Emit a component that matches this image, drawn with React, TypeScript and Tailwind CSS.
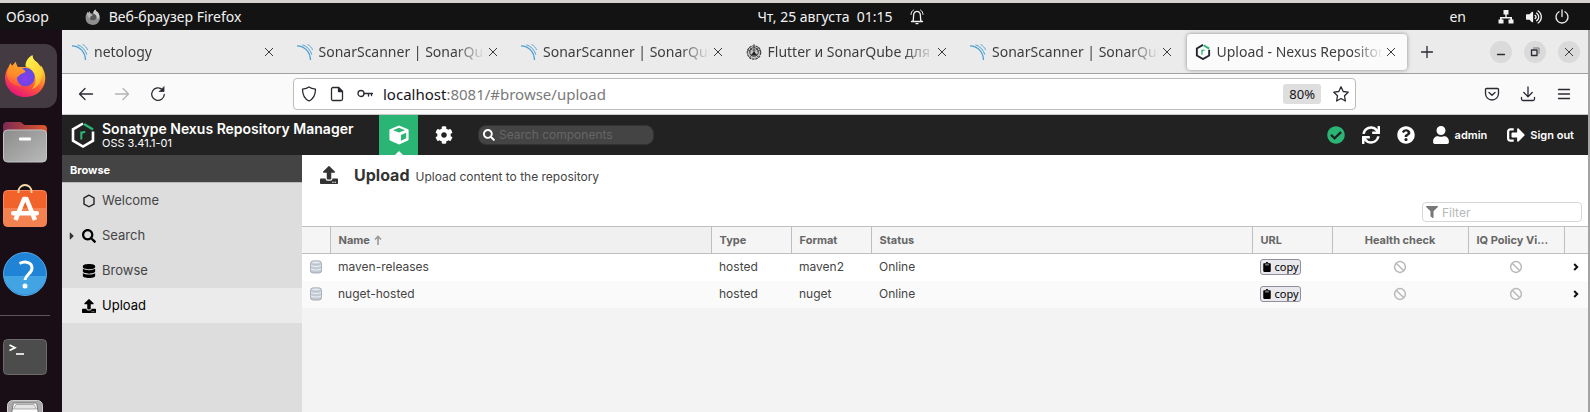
import React from "react";
import {
  FaSearch,
  FaDatabase,
  FaUpload,
  FaCog,
  FaCheckCircle,
  FaSync,
  FaQuestionCircle,
  FaUser,
  FaSignOutAlt,
  FaFilter,
  FaClipboard,
  FaCaretRight,
  FaVolumeUp,
} from "react-icons/fa";

const SYSTEM_FONT = "font-['Noto_Sans','Open_Sans',sans-serif]";
const NEXUS_FONT = "font-['Inter','Open_Sans',sans-serif]";

/* ---------- Drawings ---------- */

function FirefoxLogo({ className }: { className: string }) {
  return (
    <svg viewBox="0 0 44 44" className={className} aria-hidden="true">
      <defs>
        <linearGradient id="ff-body" x1="0.8" y1="0.05" x2="0.3" y2="1">
          <stop offset="0" stopColor="#fff44f" />
          <stop offset="0.3" stopColor="#ffb02e" />
          <stop offset="0.6" stopColor="#ff5a36" />
          <stop offset="1" stopColor="#e6127f" />
        </linearGradient>
        <radialGradient id="ff-globe" cx="0.5" cy="0.6" r="0.6">
          <stop offset="0" stopColor="#8a3df0" />
          <stop offset="1" stopColor="#5b4bdb" />
        </radialGradient>
        <linearGradient id="ff-flame" x1="0.3" y1="0" x2="0.8" y2="1">
          <stop offset="0" stopColor="#fff14d" />
          <stop offset="0.7" stopColor="#ffcf33" />
          <stop offset="1" stopColor="#ff9a2b" />
        </linearGradient>
        <linearGradient id="ff-fox" x1="0.6" y1="0" x2="0.4" y2="1">
          <stop offset="0" stopColor="#ffa62b" />
          <stop offset="0.55" stopColor="#ff8a2a" />
          <stop offset="1" stopColor="#ff4c3c" />
        </linearGradient>
      </defs>
      <path
        fill="url(#ff-body)"
        d="M5 12c0-1 1.200-2.800 2-3.600.2 1.600.8 2.300 1.400 2.900C10 9.500 11 8.300 12 7c.3 2 1 4 2 5.200h9c-.5-5 2-9.500 6-12 .2 3 1.500 4.800 4 6.800 2 1.600 3.300 3.600 4 5.400l.8-1.600c4 5.500 5.600 12 3.600 18.700C38.800 38 31.500 43 22 43 10.500 43 1 34.500 1 23c0-4.200 1.500-8 4-11z"
      />
      <circle cx="22" cy="22.500" r="9.500" fill="url(#ff-globe)" />
      <path
        fill="url(#ff-flame)"
        d="M22 11.500c0-5 2.500-9 7-11.300.2 3 1.500 4.800 4 6.800 5 4 7.500 10 5.500 17-1.500 5.500-5.500 9.500-10 11 3-3 4.500-7.500 3.500-12.500-1-5.500-4.500-9.500-10-11z"
      />
      <path
        fill="url(#ff-fox)"
        d="M5 12c0-1 1.200-2.800 2-3.600.2 1.600.8 2.300 1.400 2.900C10 9.500 11 8.300 12 7c.3 2 1 4 2 5.200 3.500-.2 5.500 2.300 8 4.300 0 1.700-4 2-5.500 3.500S15.500 22 13.500 22.500c-.8 3 1.500 8 6 10-8 0-15-4-16.500-11.500 0-3 .6-6 2-9z"
      />
    </svg>
  );
}

function FirefoxSmall() {
  return (
    <svg viewBox="0 0 16 16" className="size-4" aria-hidden="true">
      <path
        fill="#8f8f8f"
        d="M2 4l.8-1 .6 1L4.800 2.300 5.300 4.500h3C8.200 2.800 9 1.300 10.500.5c.2 1.500 1.300 2 2.500 3l.4 1c1.600 1.800 2 4.500 1.100 6.800A7.200 7.200 0 0 1 .6 9C.5 7 1 5.500 2 4z"
      />
      <circle cx="8" cy="8" r="3.300" fill="#555" />
      <path fill="#ccc" d="M8.300 4.500C8.200 2.800 9 1.300 10.500.5c.2 1.500 1.300 2 2.500 3 1.800 2 1.700 5-.5 7-.2-3-1.200-5-4.200-6z" />
      <path fill="#b5b5b5" d="M2 4l.8-1 .6 1L4.800 2.300 5.300 4.500 8 6 5.500 7.500 5 9.500C3 9 2 6 2 4z" />
    </svg>
  );
}

function FilesIcon() {
  return (
    <svg viewBox="0 0 44 44" className="size-11" aria-hidden="true">
      <defs>
        <linearGradient id="fl-back" x1="0" x2="1">
          <stop offset="0" stopColor="#7a2a55" />
          <stop offset="1" stopColor="#e2562a" />
        </linearGradient>
        <linearGradient id="fl-front" x1="0" y1="0" x2="1" y2="1">
          <stop offset="0" stopColor="#8c8c8c" />
          <stop offset="1" stopColor="#b9b9b9" />
        </linearGradient>
      </defs>
      <path fill="url(#fl-back)" d="M0 6a4 4 0 0 1 4-4h13c2 0 3 3 5 3h18a4 4 0 0 1 4 4v10H0z" />
      <rect x="0.500" y="10" width="43" height="32" rx="4" fill="url(#fl-front)" stroke="#c4c4c4" />
      <rect x="16" y="17.500" width="12" height="3" rx="1" fill="#fff" />
    </svg>
  );
}

function SoftwareIcon() {
  return (
    <svg viewBox="0 0 44 48" className="h-12 w-11" aria-hidden="true">
      <rect x="0.500" y="6.500" width="43" height="36" rx="4" fill="#f2622b" stroke="#f7885c" />
      <path fill="#f48250" d="M1 24h42v14.500a4 4 0 0 1-4 4H5a4 4 0 0 1-4-4z" />
      <path d="M15.500 9V7.500a6.500 6.500 0 0 1 13 0V9" fill="none" stroke="#f8dca8" strokeWidth="1.800" />
      <path d="M12.500 36 L21 15h2.500L32 36" fill="none" stroke="#fff" strokeWidth="4.500" strokeLinejoin="round" />
      <rect x="8" y="27" width="28" height="4.500" rx="2.200" fill="#fff" />
    </svg>
  );
}

function HelpIcon() {
  return (
    <svg viewBox="0 0 44 44" className="size-11" aria-hidden="true">
      <circle cx="22" cy="22" r="21.500" fill="#1f84d6" stroke="#5ba7e6" />
      <path fill="#43a4e4" d="M.7 24h42.600a21.500 21.500 0 0 1-42.600 0z" />
      <path
        d="M16.500 11.500c6-3 12.500-1 12.500 4.500 0 6-6.500 6-7 12"
        fill="none"
        stroke="#fff"
        strokeWidth="3"
      />
      <circle cx="22" cy="34" r="2.500" fill="#fff" />
    </svg>
  );
}

function TerminalIcon() {
  return (
    <svg viewBox="0 0 44 36" className="h-9 w-11" aria-hidden="true">
      <rect x="0.500" y="0.500" width="43" height="35" rx="4" fill="#4c4c4c" stroke="#6b6b6b" />
      <path d="M6.500 6l5.500 2.700-5.500 2.700" fill="none" stroke="#fff" strokeWidth="1.700" />
      <path d="M13 15h8" stroke="#fff" strokeWidth="1.600" />
    </svg>
  );
}

function DiskIcon() {
  return (
    <svg viewBox="0 0 36 46" className="h-[46px] w-9" aria-hidden="true">
      <rect x="0.500" y="0.500" width="35" height="45" rx="5" fill="#a9a9a9" stroke="#cfcfcf" />
      <path d="M4.500 14 6 5c.2-1.500 1-2 2-2h20c1 0 1.800.5 2 2l1.500 9z" fill="#fff" stroke="#777" />
      <path d="M9 4.500h18L29.500 9h-23z" fill="#e4e4e4" stroke="#999" strokeWidth="0.800" />
    </svg>
  );
}

function SonarIcon() {
  return (
    <svg viewBox="0 0 16 16" className="size-4 shrink-0" fill="none" stroke="#4b9fd5" aria-hidden="true">
      <path d="M0 1.800C7.500 1.800 13.300 7.800 13.500 16" strokeWidth="1.300" />
      <path d="M5.500.8C10 2.200 13.600 6 14.800 10.600" strokeWidth="1" />
      <path d="M10.500.3c2.300 1.300 4.100 3.300 5.200 5.700" strokeWidth="0.900" />
    </svg>
  );
}

function FlutterIcon() {
  return (
    <svg viewBox="0 0 16 16" className="size-4 shrink-0" fill="none" stroke="#444" aria-hidden="true">
      <circle cx="8" cy="8.500" r="6.700" fill="#c4c4c4" strokeWidth="1.200" strokeDasharray="2.500 .8" />
      <circle cx="8" cy="8" r="4.300" strokeWidth="1" />
      <path d="M8 0v4M1 6l4 1M15 6l-4 1M4 13l2.500-3M12 13 9.500 10M3 3l3 3M13 3l-3 3" strokeWidth="0.800" />
      <path d="M5 11.500h6L8 7z" fill="#222" stroke="none" />
      <circle cx="8" cy="6" r="1" fill="#eee" />
    </svg>
  );
}

function NexusIcon({ className, stroke, width }: { className: string; stroke: string; width: number }) {
  return (
    <svg viewBox="0 0 24 26" className={className} fill="none" aria-hidden="true">
      <path d="M12 1.500 2 7.300v11.400l10 5.800 10-5.800V9.500" stroke={stroke} strokeWidth={width} />
      <path d="M13 2l9 5.500" stroke="#2ab574" strokeWidth={width} />
      <path d="M10.300 17.500V9.500M10.300 13c.2-2.300 1.700-3.300 4-2.800" stroke="#2ab574" strokeWidth="2" />
    </svg>
  );
}

function CloseIcon() {
  return (
    <svg viewBox="0 0 16 16" className="size-4" aria-hidden="true">
      <path d="M4 4l8 8M12 4l-8 8" stroke="#3a3a3a" strokeWidth="1" />
    </svg>
  );
}

function CubeIcon() {
  return (
    <svg viewBox="0 0 20 20" className="size-5" aria-hidden="true">
      <path
        fill="#fff"
        d="M10 .5 19 4.200c.4.200.6.400.6.900v9.400c0 .4-.2.700-.6.900L10 19.500 1 15.400c-.4-.2-.6-.5-.6-.9V5.100c0-.5.2-.7.600-.9z"
      />
      <path fill="#2ab574" d="M10 2.800 16 5.200 10 7.500 4 5.200zM12 10l5.200-2.200v5.400L12 15.800z" />
    </svg>
  );
}

function BlockedIcon() {
  return (
    <svg viewBox="0 0 14 14" className="mx-auto size-3.5" fill="none" stroke="#b8b8b8" role="img" aria-label="Not available">
      <circle cx="7" cy="7" r="5.400" strokeWidth="1.500" />
      <path d="M3.200 3.200l7.600 7.600" strokeWidth="1.500" />
    </svg>
  );
}

function LineIcon({ children, className = "size-4", color = "#2b2a33" }: { children: React.ReactNode; className?: string; color?: string }) {
  return (
    <svg
      viewBox="0 0 16 16"
      className={className}
      fill="none"
      stroke={color}
      strokeWidth="1.300"
      strokeLinecap="round"
      strokeLinejoin="round"
      aria-hidden="true"
    >
      {children}
    </svg>
  );
}

/* ---------- Desktop ---------- */

function TopBar() {
  return (
    <header className="grid h-[30px] grid-cols-3 items-center border-t-3 border-[#d6d2cf] bg-[#131313] text-sm text-[#f2f2f2]">
      <div className="flex items-center gap-9 pl-1.5">
        <button className="cursor-pointer">Обзор</button>
        <button className="flex cursor-pointer items-center gap-2">
          <FirefoxSmall />
          Веб-браузер Firefox
        </button>
      </div>
      <div className="flex items-center justify-center gap-4 pl-[92px]">
        <button className="cursor-pointer whitespace-pre">Чт, 25 августа  01:15</button>
        <LineIcon className="size-4" color="#f2f2f2">
          <path d="M2.500 12.500h11M4 12.300c.8-2.500.2-6 1-8C5.600 2.900 6.800 2.300 8 2.300s2.400.6 3 2c.8 2 .2 5.500 1 8M7 14.600h2" />
          <path d="M2 5.500C2 3.500 3 2 4.500 1M14 5.500C14 3.500 13 2 11.500 1" strokeWidth="1" />
        </LineIcon>
      </div>
      <div className="flex items-center justify-end pr-5">
        <button className="mr-8 cursor-pointer">en</button>
        <div className="flex items-center gap-3">
          <svg viewBox="0 0 16 16" className="size-4" fill="#f2f2f2" aria-label="Network">
            <path d="M5.500 1h5v4.500H8.700V8H14v2.500h1.500V14.500h-5v-4h1.800V9.500H3.700v1h1.800v4H.5v-4H2V8h5.300V5.500H5.500z" />
          </svg>
          <FaVolumeUp className="size-4" aria-label="Volume" />
          <LineIcon className="size-4" color="#f2f2f2">
            <path d="M5 2.800a6 6 0 1 0 6 0M8 1v6.500" />
          </LineIcon>
        </div>
      </div>
    </header>
  );
}

function Dock() {
  const item = "flex h-[66px] w-[50px] cursor-pointer items-center justify-center";
  return (
    <nav aria-label="Dock" className="flex w-[62px] shrink-0 flex-col overflow-hidden bg-[#190e16] pt-[13px]">
      <button aria-label="Firefox" className="my-px flex h-16 w-[57px] shrink-0 cursor-pointer items-center rounded-r-xl bg-[#433b41] pl-1">
        <FirefoxLogo className="size-[43px]" />
      </button>
      <button aria-label="Files" className={`${item} shrink-0`}><FilesIcon /></button>
      <button aria-label="Software" className={`${item} shrink-0`}><SoftwareIcon /></button>
      <button aria-label="Help" className={`${item} shrink-0`}><HelpIcon /></button>
      <hr className="my-2 mr-3 shrink-0 border-[#5d555b]" />
      <button aria-label="Terminal" className={`${item} shrink-0`}><TerminalIcon /></button>
      <button aria-label="Disk" className={`${item} shrink-0`}><DiskIcon /></button>
    </nav>
  );
}

/* ---------- Browser chrome ---------- */

type TabData = { title: string; icon: React.ReactNode; active?: boolean };

const TABS: TabData[] = [
  { title: "netology", icon: <SonarIcon /> },
  { title: "SonarScanner | SonarQube", icon: <SonarIcon /> },
  { title: "SonarScanner | SonarQube", icon: <SonarIcon /> },
  { title: "Flutter и SonarQube для", icon: <FlutterIcon /> },
  { title: "SonarScanner | SonarQube", icon: <SonarIcon /> },
  {
    title: "Upload - Nexus Repository",
    icon: <NexusIcon className="size-4 shrink-0" stroke="#23232f" width={3} />,
    active: true,
  },
];

function TabStrip() {
  return (
    <div className="flex h-11 items-center border-b border-[#a0a0a0] bg-[#ebebeb] pr-2">
      <div role="tablist" className="flex min-w-0 flex-1">
        {TABS.map((tab, i) => (
          <div key={i} className="min-w-0 flex-1 px-0.5">
            <div
              className={`flex h-9 items-center rounded px-2 ${
                tab.active ? "bg-[#fbfbfb] shadow-[0_0_4px_rgba(0,0,0,0.4)]" : ""
              }`}
            >
              {tab.icon}
              <button
                role="tab"
                aria-selected={!!tab.active}
                className="ml-1.5 min-w-0 flex-1 cursor-pointer overflow-hidden text-left text-sm whitespace-nowrap text-[#3d3d3d] [mask-image:linear-gradient(to_right,black_82%,transparent)]"
              >
                {tab.title}
              </button>
              <button aria-label="Close tab" className="cursor-pointer">
                <CloseIcon />
              </button>
            </div>
          </div>
        ))}
      </div>
      <button aria-label="New tab" className="ml-2.5 cursor-pointer">
        <LineIcon><path d="M8 2.500v11M2.500 8h11" /></LineIcon>
      </button>
      <div className="ml-[55px] flex gap-3">
        <button aria-label="Minimize" className="flex size-[22px] cursor-pointer items-center justify-center rounded-full bg-[#dadada]">
          <LineIcon><path d="M4.500 10.500h7" /></LineIcon>
        </button>
        <button aria-label="Restore" className="flex size-[22px] cursor-pointer items-center justify-center rounded-full bg-[#dadada]">
          <LineIcon>
            <path d="M4.500 6h5.500v5.500H4.500z" />
            <path d="M6.500 4H12v5.500" stroke="#777" strokeWidth="1" />
          </LineIcon>
        </button>
        <button aria-label="Close window" className="flex size-[22px] cursor-pointer items-center justify-center rounded-full bg-[#dadada]">
          <CloseIcon />
        </button>
      </div>
    </div>
  );
}

function NavBar() {
  return (
    <div className="flex h-[41px] items-center border-b border-[#c8c8c8] bg-[#fafafa] px-4">
      <div className="flex w-[215px] gap-5">
        <button aria-label="Back" className="cursor-pointer">
          <LineIcon><path d="M1.500 8h13M7 2.500 1.500 8 7 13.500" /></LineIcon>
        </button>
        <button aria-label="Forward" className="cursor-pointer">
          <LineIcon color="#b3b3b3"><path d="M1.500 8h13M9 2.500 14.500 8 9 13.500" /></LineIcon>
        </button>
        <button aria-label="Reload" className="cursor-pointer">
          <LineIcon>
            <path d="M14.300 8.500a6.300 6.300 0 1 1-2-5" />
            <path d="M14 1v4.500H9.500z" fill="#2b2a33" strokeWidth="0.800" />
          </LineIcon>
        </button>
      </div>
      <div className="flex h-8 flex-1 items-center rounded border border-[#bdbdbd] bg-white pl-[7px] pr-1.5">
        <div className="flex items-center gap-3">
          <LineIcon><path d="M8 1C6 2.500 4 2.900 1.500 3.200c0 5 1.500 9.300 6.500 11.800 5-2.500 6.500-6.800 6.500-11.800C12 2.900 10 2.500 8 1z" /></LineIcon>
          <LineIcon>
            <path d="M4 1.500h5.500l4 4V13a1.500 1.500 0 0 1-1.500 1.500H4A1.500 1.500 0 0 1 2.500 13V3A1.500 1.500 0 0 1 4 1.500z" />
            <path d="M9.500 1.500v4h4z" fill="#2b2a33" />
          </LineIcon>
          <LineIcon>
            <circle cx="4" cy="7.500" r="3" />
            <path d="M7 7.500h8.500M11.500 7.500V10M14.500 7.500V9.500" />
          </LineIcon>
        </div>
        <div className="ml-2.5 flex-1 text-[15px] whitespace-nowrap text-[#7a7a7a]">
          <span className="text-[#15141a]">localhost</span>:8081/#browse/upload
        </div>
        <button className="h-5 cursor-pointer rounded-[3px] bg-[#dedede] px-1.5 text-[13px] leading-5 text-[#15141a]">80%</button>
        <button aria-label="Bookmark this page" className="ml-3 cursor-pointer">
          <LineIcon><path d="M8 .8l2.200 4.700 5 .7-3.700 3.600.9 5.200L8 12.500 3.600 15l.9-5.200L.8 6.200l5-.7z" /></LineIcon>
        </button>
      </div>
      <div className="ml-32 flex gap-5">
        <button aria-label="Pocket" className="cursor-pointer">
          <LineIcon>
            <path d="M2.500 2.500h11a1 1 0 0 1 1 1v4a6.500 6.500 0 0 1-13 0v-4a1 1 0 0 1 1-1z" />
            <path d="M5 6.500l3 2.800 3-2.800" />
          </LineIcon>
        </button>
        <button aria-label="Downloads" className="cursor-pointer">
          <LineIcon><path d="M8 1v9.500M3.800 6.500 8 10.700l4.200-4.200M1.500 11.500v1.500A1.500 1.500 0 0 0 3 14.500h10a1.500 1.500 0 0 0 1.500-1.500v-1.500" /></LineIcon>
        </button>
        <button aria-label="Menu" className="cursor-pointer">
          <LineIcon><path d="M2.500 3.500h11M2.500 8h11M2.500 12.500h11" /></LineIcon>
        </button>
      </div>
    </div>
  );
}

/* ---------- Nexus application ---------- */

function NexusHeader() {
  return (
    <header className="flex h-10 items-center bg-[#222] text-white">
      <div className="flex w-[317px] shrink-0 items-center gap-[7px] pl-[9px]">
        <NexusIcon className="h-[26px] w-6 shrink-0" stroke="#fff" width={2.6} />
        <div className="whitespace-nowrap">
          <div className="text-sm leading-4 font-semibold">Sonatype Nexus Repository Manager</div>
          <div className="text-[11px] leading-3">OSS 3.41.1-01</div>
        </div>
      </div>
      <button aria-label="Browse server contents" className="relative flex h-full w-[39px] cursor-pointer items-center justify-center bg-[#2ab574]">
        <CubeIcon />
        <span className="absolute bottom-0 left-1/2 -translate-x-1/2 border-x-4 border-b-4 border-x-transparent border-b-white" />
      </button>
      <button aria-label="Administration" className="ml-[17px] cursor-pointer">
        <FaCog className="size-[18px]" />
      </button>
      <label className="ml-[25px] flex h-5 w-44 items-center gap-1 rounded-lg border border-[#333] bg-[#444] pl-1">
        <FaSearch className="size-3" />
        <span className="sr-only">Search components</span>
        <input
          type="text"
          placeholder="Search components"
          className="min-w-0 flex-1 bg-transparent text-xs outline-none placeholder:text-[#666]"
        />
      </label>
      <div className="ml-auto flex items-center pr-[14px] text-[11px] font-semibold">
        <button aria-label="System status" className="cursor-pointer text-[#2ab574]"><FaCheckCircle className="size-[18px]" /></button>
        <button aria-label="Refresh" className="ml-[17px] cursor-pointer"><FaSync className="size-[18px]" /></button>
        <button aria-label="Help" className="ml-[17px] cursor-pointer"><FaQuestionCircle className="size-[18px]" /></button>
        <button className="ml-[17px] flex cursor-pointer items-center gap-[5px]">
          <FaUser className="size-[18px]" />
          admin
        </button>
        <button className="ml-5 flex cursor-pointer items-center gap-[5px]">
          <FaSignOutAlt className="size-[18px]" />
          Sign out
        </button>
      </div>
    </header>
  );
}

function Sidebar() {
  const items = [
    { label: "Welcome", icon: <svg viewBox="0 0 14 14" className="size-3.5" aria-hidden="true"><path d="M7 1.200 2 4v6l5 2.800L12 10V4z" fill="none" stroke="#222" strokeWidth="1.400" /></svg> },
    { label: "Search", icon: <FaSearch className="size-3.5" />, caret: true },
    { label: "Browse", icon: <FaDatabase className="size-3.5" /> },
    { label: "Upload", icon: <FaUpload className="size-3.5" />, active: true },
  ];
  return (
    <nav aria-label="Browse" className="w-60 shrink-0 bg-[#ddd]">
      <h2 className="h-7 border-b border-[#bbb] bg-[#444] pl-2 text-[11px] leading-[30px] font-bold text-white">Browse</h2>
      <ul>
        {items.map((it) => (
          <li key={it.label}>
            <a
              href={`#${it.label.toLowerCase()}`}
              className={`flex h-[35px] items-center pl-1 text-[13px] ${it.active ? "bg-[#ebebeb] text-black" : "text-[#444]"}`}
            >
              <span className="w-4 text-[#333]">{it.caret && <FaCaretRight className="size-3" />}</span>
              <span className="flex text-black">{it.icon}</span>
              <span className="ml-1.5">{it.label}</span>
            </a>
          </li>
        ))}
      </ul>
    </nav>
  );
}

function RepoIcon() {
  return (
    <svg viewBox="0 0 12 14" className="h-3.5 w-3" aria-hidden="true">
      <rect x="0.500" y="1" width="11" height="12" rx="2.500" fill="#c3cad3" stroke="#98a1ac" strokeWidth="0.800" />
      <ellipse cx="6" cy="2.500" rx="5" ry="1.600" fill="#e3e8ee" stroke="#a4adb8" strokeWidth="0.600" />
      <path d="M.8 5.500c2 1.300 8.400 1.300 10.400 0M.8 9c2 1.300 8.400 1.300 10.400 0" fill="none" stroke="#eef1f5" />
    </svg>
  );
}

const REPOS = [
  { name: "maven-releases", type: "hosted", format: "maven2", status: "Online" },
  { name: "nuget-hosted", type: "hosted", format: "nuget", status: "Online" },
];

function RepoTable() {
  const th = "border-r border-[#bfbfbf] px-2 text-left font-bold";
  return (
    <table className="w-full table-fixed border-collapse text-xs text-[#444]">
      <colgroup>
        <col className="w-7" />
        <col />
        <col className="w-20" />
        <col className="w-20" />
        <col />
        <col className="w-20" />
        <col className="w-[136px]" />
        <col className="w-24" />
        <col className="w-6" />
      </colgroup>
      <thead>
        <tr className="h-[27px] border-y border-[#bfbfbf] bg-[#f5f5f5] text-[11px] text-[#666]">
          <th className={th} aria-label="Icon" />
          <th className={`${th} bg-[#f0f0f0]`}>
            <span className="flex items-center gap-1">
              Name
              <svg viewBox="0 0 8 10" className="h-2.5 w-2" aria-hidden="true">
                <path d="M4 10V1.500M1 4.500l3-3 3 3" fill="none" stroke="#999" strokeWidth="1.600" />
              </svg>
            </span>
          </th>
          <th className={th}>Type</th>
          <th className={th}>Format</th>
          <th className={th}>Status</th>
          <th className={th}>URL</th>
          <th className="border-r border-[#bfbfbf] text-center font-bold">Health check</th>
          <th className="border-r border-[#bfbfbf] pl-2 text-left font-bold whitespace-nowrap" title="IQ Policy Violations">
            IQ Policy Vi...
          </th>
          <th aria-label="Open" />
        </tr>
      </thead>
      <tbody>
        {REPOS.map((r) => (
          <tr key={r.name} className="h-[27px] odd:bg-white even:bg-[#fafafa]">
            <td className="pl-2"><RepoIcon /></td>
            <td className="px-2">{r.name}</td>
            <td className="px-2">{r.type}</td>
            <td className="px-2">{r.format}</td>
            <td className="px-2">{r.status}</td>
            <td className="px-2">
              <button className="flex h-4 w-[41px] cursor-pointer items-center justify-center gap-0.5 rounded-[3px] border border-[#8f8f9d] bg-[#e9e9ed] font-['Noto_Sans',sans-serif] text-[11px] leading-3 text-black">
                <FaClipboard className="size-2.5" />
                copy
              </button>
            </td>
            <td><BlockedIcon /></td>
            <td><BlockedIcon /></td>
            <td>
              <svg viewBox="0 0 8 8" className="mx-auto size-2" aria-hidden="true">
                <path d="M2.200 1l3 3-3 3" fill="none" stroke="#111" strokeWidth="2" />
              </svg>
            </td>
          </tr>
        ))}
      </tbody>
    </table>
  );
}

function UploadPage() {
  return (
    <main className="min-w-0 flex-1 bg-[#f3f3f3]">
      <div className="flex h-[71px] justify-between bg-white pl-[18px] pr-1.5">
        <div className="flex h-10 items-center text-[#333]">
          <FaUpload className="size-[18px]" />
          <div className="ml-4 flex items-baseline gap-1.5">
            <h1 className="text-base font-bold">Upload</h1>
            <p className="text-xs text-[#444]">Upload content to the repository</p>
          </div>
        </div>
        <label className="mb-1 flex h-5 w-40 items-center gap-1 self-end rounded-sm border border-[#d6d6d6] bg-white pl-[3px]">
          <FaFilter className="size-3 text-[#777]" />
          <span className="sr-only">Filter</span>
          <input type="text" placeholder="Filter" className="min-w-0 flex-1 bg-transparent pt-0.5 text-xs outline-none placeholder:text-[#b8b8b8]" />
        </label>
      </div>
      <RepoTable />
    </main>
  );
}

export default function App() {
  return (
    <div className={`flex h-screen flex-col overflow-hidden ${SYSTEM_FONT}`}>
      <TopBar />
      <div className="flex min-h-0 flex-1">
        <Dock />
        <div className="flex min-w-0 flex-1 flex-col border-r-2 border-[#a3a3a3]">
          <TabStrip />
          <NavBar />
          <div className={`flex flex-1 flex-col ${NEXUS_FONT}`}>
            <NexusHeader />
            <div className="flex flex-1">
              <Sidebar />
              <UploadPage />
            </div>
          </div>
        </div>
      </div>
    </div>
  );
}
